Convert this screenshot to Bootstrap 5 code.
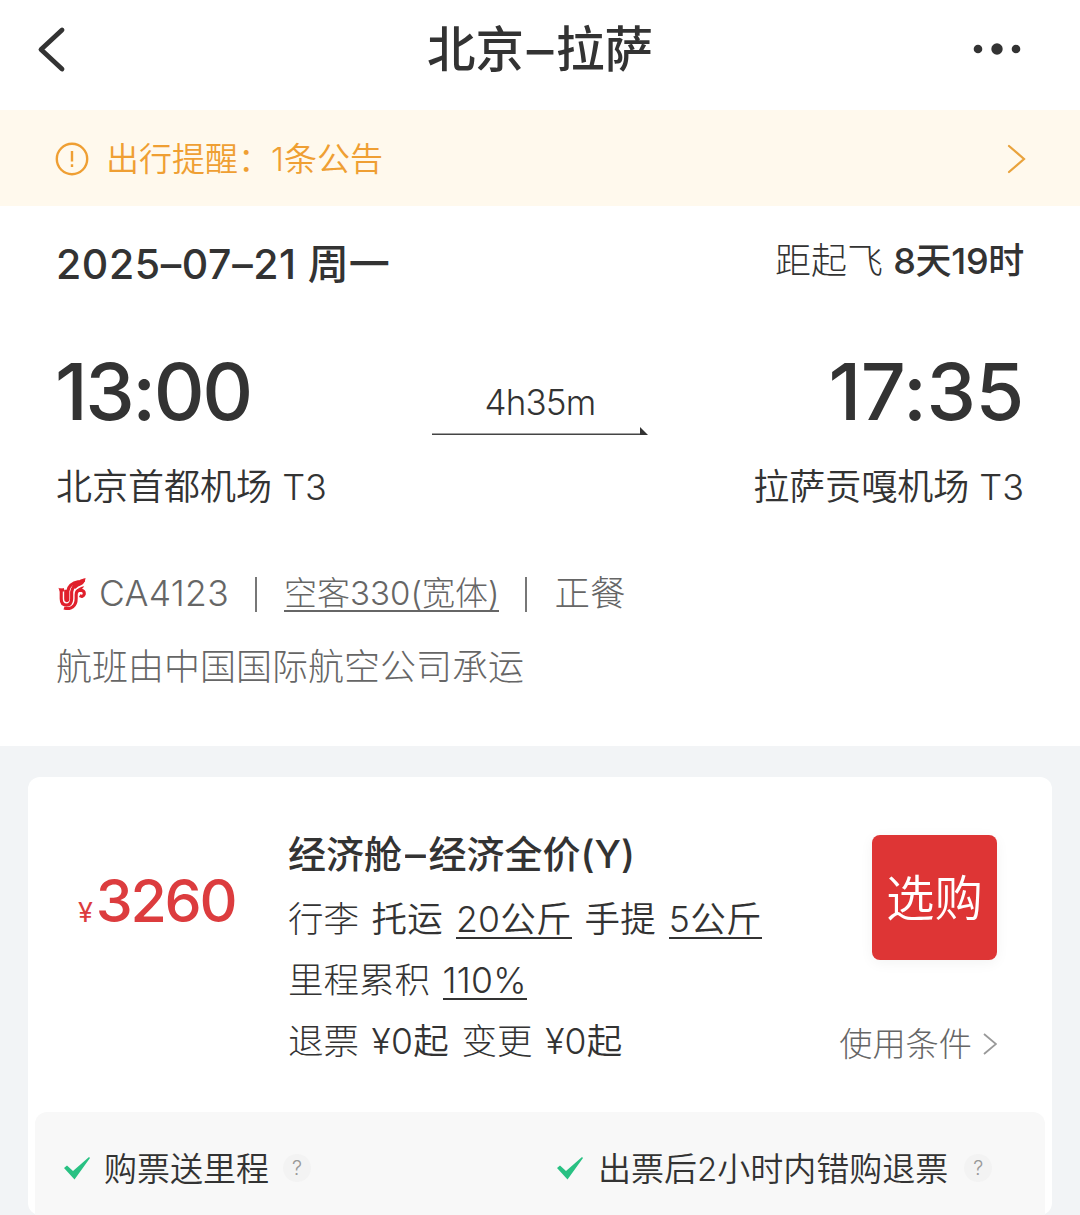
<!DOCTYPE html>
<html lang="zh-CN">
<head>
<meta charset="utf-8">
<meta name="viewport" content="width=device-width, initial-scale=1">
<title>北京–拉萨</title>
<link href="https://cdn.jsdelivr.net/npm/bootstrap@5.3.0/dist/css/bootstrap.min.css" rel="stylesheet">
<style>
body{font-family:Inter,"Noto Sans CJK SC",sans-serif;font-feature-settings:"calt" 0;color:#333;background:#f2f4f6;height:1215px;overflow:hidden;white-space:nowrap}
svg{display:block;flex:none}
.dash{display:inline-block;transform:scaleX(1.1);margin:0 .08em}
.top-bar{height:110px;padding:0 58px 12px 36px}
.bar-side{width:72px}
.top-title{font-size:48.5px;font-weight:500;line-height:1;padding-top:2px}
.notice{height:96px;background:#fff9ed;color:#ef9f33;padding:2px 54px 0 55px;font-size:33px;font-weight:350}
.notice-text{margin-left:17px;padding-top:2px}
.flight{height:540px;padding:0 56px}
.date-row{height:118px}
.date-text{font-size:41px;font-weight:500}
.date-text span{font-weight:530;letter-spacing:.6px}
.countdown{font-size:36px;font-weight:300;padding-bottom:8px}
.countdown b{font-weight:500;letter-spacing:-.3px}
.time-row{height:134px}
.clock{width:340px;font-size:79px;font-weight:500;line-height:134px}
.dep{letter-spacing:-2.5px;text-indent:-1px}
.arr{letter-spacing:-.4px}
.duration{width:216px;font-size:35px;font-weight:300;line-height:50px;padding-top:53px;letter-spacing:-.8px}
.airport-row{height:58px;font-size:36px;font-weight:350}
.info-row{height:120px;padding-top:36px;padding-left:2px;font-size:35.5px;font-weight:300;color:#666}
.fno{margin-left:13px;letter-spacing:.3px}
.sep{width:2px;height:35px;background:#777;margin:0 27px 0 26px}
.operator{font-size:36px;font-weight:300;color:#666;line-height:62px}
.underlined{display:inline-block;border-bottom:2px solid currentColor;line-height:34px}
.plane{font-size:33px}
.fare{margin:31px 28px 0;border-radius:12px;height:438px;padding-top:47px}
.fare-main{height:288px;padding-left:50px;padding-right:55px}
.price-col{width:210px;padding-top:47px;color:#dc3c3e;font-size:59px;font-weight:480;line-height:60px;letter-spacing:-2.2px}
.price-col span{font-size:27px;font-weight:400;margin-right:5px}
.fare-title{font-size:38px;font-weight:500;line-height:60px;margin-bottom:5px}
.fare-title .dash{margin:0 .1em}
.fare-line{font-size:35.5px;font-weight:300;line-height:61px;word-spacing:2.6px}
.fare-line b{font-weight:350;letter-spacing:.25px}
.buy{width:125px;height:125px;margin-top:11px;background:#de3535;color:#fff;border-radius:8px;font-size:48.5px;font-weight:350;line-height:125px;box-shadow:0 3px 14px rgba(0,0,0,.05)}
.terms{font-size:33.2px;font-weight:300;color:#666;margin-top:52px;line-height:64px}
.terms svg{margin-left:9px}
.benefits{margin:0 7px;height:103px;padding:0 0 0 28px;background:#f8f8f8;border-radius:12px 12px 0 0;font-size:33px;font-weight:350}
.benefits>div{height:111px}
.b1{width:493px}
.benefit-text{margin:4px 14px 0 13px}
.b2 .benefit-text{margin:4px 16px 0 14px}
.help{width:28px;height:28px;border-radius:50%;background:#f3f3f3;color:#999;font-size:20px;line-height:28px}
</style>
</head>
<body>
<header class="top-bar bg-white d-flex align-items-center justify-content-between">
  <div class="bar-side"><svg width="30" height="48" viewBox="0 0 30 48" fill="none" stroke="#333" stroke-width="4.800" stroke-linecap="round" stroke-linejoin="round"><path d="M26 5 5 24.500 26 44"/></svg></div>
  <h1 class="top-title m-0">北京<span class="dash">–</span>拉萨</h1>
  <svg width="50" height="14" viewBox="0 0 50 14" fill="#333"><circle cx="6" cy="7" r="4.3"/><circle cx="25" cy="7" r="5.7"/><circle cx="44" cy="7" r="4.3"/></svg>
</header>
<section class="notice d-flex align-items-center">
  <svg width="34" height="34" viewBox="0 0 34 34" fill="none" stroke="#ef9f33" stroke-width="2.4"><circle cx="17" cy="17" r="15.2"/><path d="M17 9v10.5M17 22.3v2.8"/></svg>
  <span class="notice-text">出行提醒：1条公告</span>
  <svg class="ms-auto" width="20" height="32" viewBox="0 0 20 32" fill="none" stroke="#e9a33d" stroke-width="2.2" stroke-linecap="round"><path d="M3 3 18 16 3 29"/></svg>
</section>
<section class="flight bg-white">
  <div class="date-row d-flex align-items-center justify-content-between">
    <div class="date-text"><span>2025–07–21</span> 周一</div>
    <div class="countdown">距起飞 <b>8天19时</b></div>
  </div>
  <div class="time-row d-flex justify-content-between">
    <div class="clock dep">13:00</div>
    <div class="duration text-center"><div>4h35m</div>
      <svg width="216" height="9" viewBox="0 0 216 9"><path d="M0 7.2H214" stroke="#444" stroke-width="1.6"/><path d="M208 0 216 8H208Z" fill="#333"/></svg>
    </div>
    <div class="clock arr text-end">17:35</div>
  </div>
  <div class="airport-row d-flex align-items-center justify-content-between"><span>北京首都机场 T3</span><span>拉萨贡嘎机场 T3</span></div>
  <div class="info-row d-flex align-items-center">
    <svg width="28" height="32" viewBox="0 0 80 92" fill="none">
      <g stroke="#e0202c" stroke-width="9"><path d="M9 30v30q0 18 15 18 14 0 15-18V40Q40 20 76 6"/><path d="M22 34v26q0 5 3 5 4 0 3-7V38Q30 16 60 10"/><path d="M17 86q15 5 25-3 10-7 10-24V48q0-13 12-13 13 1 11 12-4 9-13 4"/></g>
      <path fill="#e0202c" d="M1 28q8 5 16 1v10H5ZM40 26Q48 8 79 0 77 16 66 21 58 23 50 31ZM52 37Q60 26 75 24 70 34 58 36Z"/>
    </svg>
    <span class="fno">CA4123</span><span class="sep"></span><span class="plane underlined">空客330(宽体)</span><span class="sep"></span><span class="meal">正餐</span>
  </div>
  <div class="operator">航班由中国国际航空公司承运</div>
</section>
<main class="fare bg-white">
  <div class="fare-main d-flex">
    <div class="price-col"><span>¥</span>3260</div>
    <div class="flex-grow-1">
      <div class="fare-title">经济舱<span class="dash">–</span>经济全价(Y)</div>
      <div class="fare-line">行李 <b>托运 <span class="underlined">20公斤</span> 手提 <span class="underlined">5公斤</span></b></div>
      <div class="fare-line">里程累积 <b class="underlined">110%</b></div>
      <div class="fare-line">退票 <b>¥0起</b> 变更 <b>¥0起</b></div>
    </div>
    <div class="d-flex flex-column align-items-end">
      <button class="buy btn p-0">选购</button>
      <div class="terms d-flex align-items-center">使用条件<svg width="16" height="24" viewBox="0 0 16 24" fill="none" stroke="#999" stroke-width="1.8"><path d="M3 2 15 12 3 22"/></svg></div>
    </div>
  </div>
  <div class="benefits d-flex">
    <div class="d-flex align-items-center b1">
      <svg width="28" height="24" viewBox="0 0 28 24" fill="#29c183"><path d="M1 12 4 9.500 10 15 26 1 27 2 11.500 23.500Z"/></svg>
      <span class="benefit-text">购票送里程</span><span class="help text-center">?</span>
    </div>
    <div class="d-flex align-items-center b2">
      <svg width="28" height="24" viewBox="0 0 28 24" fill="#29c183"><path d="M1 12 4 9.500 10 15 26 1 27 2 11.500 23.500Z"/></svg>
      <span class="benefit-text">出票后2小时内错购退票</span><span class="help text-center">?</span>
    </div>
  </div>
</main>
<script src="https://cdn.jsdelivr.net/npm/bootstrap@5.3.0/dist/js/bootstrap.bundle.min.js"></script>
</body>
</html>
